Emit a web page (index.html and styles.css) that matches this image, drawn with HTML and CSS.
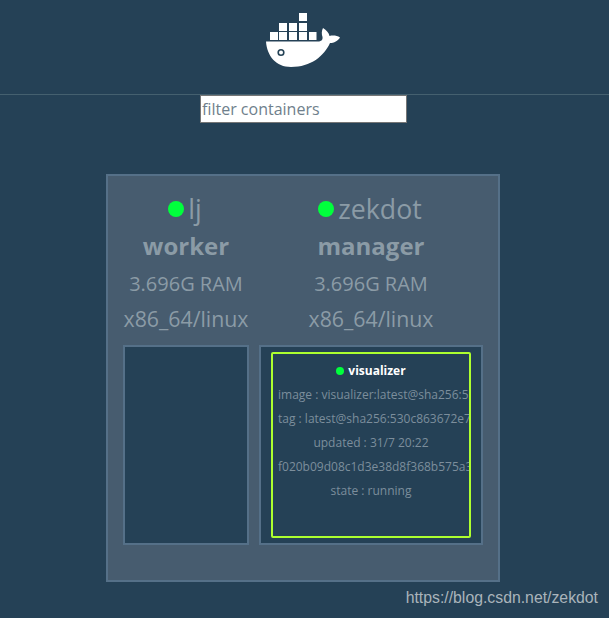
FILE: index.html
```html
<!DOCTYPE html>
<html lang="en">
<head>
<meta charset="utf-8">
<title>Visualizer</title>
<link rel="stylesheet" href="styles.css">
</head>
<body>
<header class="header">
  <svg class="logo" width="74" height="68" viewBox="0 0 74 68" aria-hidden="true">
    <g fill="#fff">
      <rect x="33" y="13" width="8" height="8"/>
      <rect x="13" y="23" width="8" height="8"/><rect x="23" y="23" width="8" height="8"/><rect x="33" y="23" width="8" height="8"/>
      <rect x="4" y="32" width="8" height="8"/><rect x="13" y="32" width="8" height="8"/><rect x="23" y="32" width="8" height="8"/><rect x="33" y="32" width="8" height="8"/><rect x="43" y="32" width="7.5" height="8"/>
      <path d="M0 41.5H52C55 41.5 57 40 56.5 37C55.5 34 55.5 31 57 28C60.5 30 63 33 63.5 36C67 35 71 35.5 74 37.5C72 41 68 43 64 43C58 56 45 67 25 67C10 67 1 56 0 41.5Z"/>
    </g>
    <circle cx="15" cy="52.5" r="2.8" fill="none" stroke="#254356" stroke-width="1.6"/>
  </svg>
</header>
<div class="filter-row">
  <input class="filter" type="text" placeholder="filter containers">
</div>
<main class="swarm">
  <section class="node worker">
    <div class="node-title"><span class="dot"></span>lj</div>
    <div class="node-role">worker</div>
    <div class="node-info node-ram">3.696G RAM</div>
    <div class="node-info node-os">x86_64/linux</div>
    <div class="node-box"></div>
  </section>
  <section class="node manager">
    <div class="node-title"><span class="dot"></span>zekdot</div>
    <div class="node-role">manager</div>
    <div class="node-info node-ram">3.696G RAM</div>
    <div class="node-info node-os">x86_64/linux</div>
    <div class="node-box">
      <article class="container">
        <div class="container-name"><span class="dot dot-small"></span>visualizer</div>
        <div class="container-line">image : visualizer:latest@sha256:530c863672e7</div>
        <div class="container-line">tag : latest@sha256:530c863672e7830d7560</div>
        <div class="container-line centered">updated : 31/7 20:22</div>
        <div class="container-line">f020b09d08c1d3e38d8f368b575a3a1b2c4d</div>
        <div class="container-line centered">state : running</div>
      </article>
    </div>
  </section>
</main>
<div class="watermark">https://blog.csdn.net/zekdot</div>
</body>
</html>
```
FILE: styles.css
```css
* { box-sizing: border-box; }
html, body { height: 100%; }
body {
  margin: 0;
  background: #254156;
  font-family: "Open Sans", sans-serif;
  color: #8b9ba6;
  overflow: hidden;
  position: relative;
}
.header {
  height: 95px;
  border-bottom: 1px solid #45606f;
  display: flex;
  justify-content: center;
}
.logo { display: block; margin-right: 3px; }
.filter-row { display: flex; justify-content: center; padding-right: 2px; }
.filter {
  width: 207px;
  height: 28px;
  border: 1px solid #767676;
  background: #fff;
  padding: 0 1px;
  font: 16px "Open Sans", sans-serif;
  margin: 0;
}
.filter::placeholder { color: #6f7f8c; opacity: 1; }
.swarm {
  width: 394px;
  height: 408px;
  margin: 51px 0 0 106px;
  background: #475c6f;
  border: 2px solid #557088;
  padding: 15px 15px 0;
  display: flex;
  gap: 10px;
}
.node { display: flex; flex-direction: column; align-items: center; flex: none; }
.worker { width: 126px; }
.manager { width: 224px; }
.node-title {
  font-size: 26.7px;
  line-height: 36px;
  display: flex;
  align-items: center;
  white-space: nowrap;
  padding-right: 2px;
}
.node-role {
  font-size: 24px;
  line-height: 33px;
  font-weight: 700;
  margin-top: 2px;
}
.node-info {
  line-height: 36px;
  white-space: nowrap;
}
.node-ram { font-size: 20px; margin-top: 4px; }
.node-os { font-size: 21.3px; margin-top: -1px; }
.node-box {
  margin-top: 8px;
  width: 100%;
  height: 200px;
  background: #254156;
  border: 2px solid #557088;
  padding: 5px 10px;
  flex: none;
}
.dot {
  display: inline-block;
  width: 16px;
  height: 16px;
  border-radius: 50%;
  background: #00ff3c;
  margin-right: 4px;
  flex: none;
}
.dot-small { width: 8px; height: 8px; margin-right: 4px; }
.container {
  width: 200px;
  height: 186px;
  border: 2px solid #adff2f;
  border-radius: 2px;
  overflow: hidden;
  padding: 0 0 0 5px;
}
.container-name {
  font-size: 12px;
  font-weight: 700;
  color: #fff;
  line-height: 16px;
  margin-top: 9px;
  display: flex;
  align-items: center;
  justify-content: center;
  padding-right: 5px;
}
.container-line {
  font-size: 12px;
  line-height: 24px;
  white-space: nowrap;
  color: #7c8e9c;
}
.container-name + .container-line { margin-top: 4px; }
.centered { text-align: center; padding-right: 5px; }
.watermark {
  position: absolute;
  right: 11px;
  top: 589px;
  font: 15.8px "Liberation Sans", sans-serif;
  color: #aab4bb;
}
```
